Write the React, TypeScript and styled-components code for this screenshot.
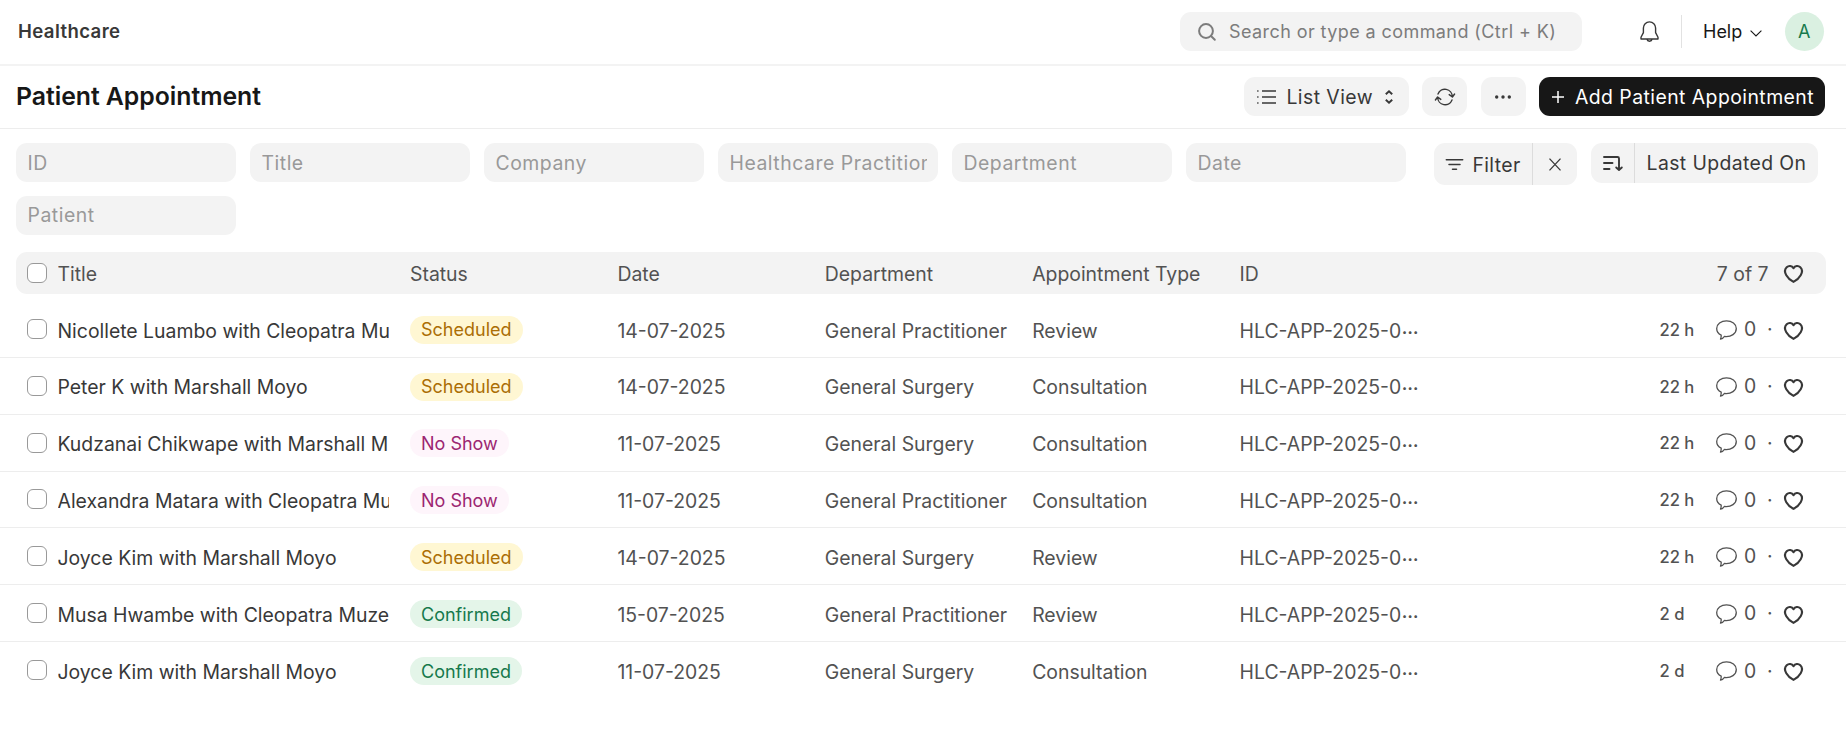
import React from "react";
import styled, { createGlobalStyle } from "styled-components";

const Global = createGlobalStyle`
  *, *::before, *::after { box-sizing: border-box; }
  body { margin: 0; background: #fff; font-family: Inter, "Liberation Sans", sans-serif; font-size: 19.4px; letter-spacing: 0.02em; color: #383838; line-height: 1.2; }
  button, input { font: inherit; letter-spacing: inherit; color: inherit; border: 0; margin: 0; }
  svg { display: block; flex: none; fill: none; stroke: currentColor; overflow: visible; }
`;

const Page = styled.div`
  width: 1846px;
  height: 735px;
  overflow: hidden;
`;
const Navbar = styled.header`
  height: 66px;
  padding: 0 22px 1px 18px;
  border-bottom: 2px solid #f3f3f3;
  display: flex;
  align-items: center;
`;
const Crumb = styled.div`
  flex: 1;
  font-size: 18.6px;
  font-weight: 600;
`;
const Search = styled.div`
  width: 402px;
  height: 39px;
  padding-left: 18px;
  border-radius: 11px;
  background: #f3f3f3;
  color: #7c7c7c;
  display: flex;
  align-items: center;
  gap: 13.5px;
  font-size: 18px;
  letter-spacing: 0.023em;
`;
const Bell = styled.div`
  margin-left: 58px;
`;
const Rule = styled.div`
  width: 1px;
  height: 33px;
  margin: 0 21px 0 22.5px;
  background: #e2e2e2;
`;
const Help = styled.div`
  display: flex;
  align-items: center;
  gap: 8px;
  width: 82px;
  font-size: 18px;
  letter-spacing: 0;
  color: #171717;
  & > svg { margin-top: 4px; }
`;
const Avatar = styled.div`
  width: 39px;
  height: 39px;
  border-radius: 50%;
  background: #daf0e1;
  color: #16794c;
  display: grid;
  place-items: center;
  font-size: 18px;
`;

const PageHead = styled.div`
  height: 63px;
  padding: 0 21px 1px 16px;
  border-bottom: 1px solid #ededed;
  display: flex;
  align-items: center;
`;
const Heading = styled.h1`
  margin: 0;
  padding-top: 1px;
  flex: 1;
  font-size: 24.8px;
  font-weight: 600;
  letter-spacing: -0.03px;
  color: #171717;
`;
const Button = styled.button<{ $w: number; $dark?: boolean; $gap?: number }>`
  width: ${(p) => p.$w}px;
  height: 39px;
  margin-left: 13.5px;
  padding: 0;
  border-radius: 11px;
  background: ${(p) => (p.$dark ? "#171717" : "#f3f3f3")};
  color: ${(p) => (p.$dark ? "#fff" : "#383838")};
  display: flex;
  align-items: center;
  justify-content: center;
  gap: ${(p) => p.$gap ?? 0}px;
  white-space: nowrap;
  letter-spacing: 0.023em;
  ${(p) => (p.$dark ? "padding-left: 2px;" : "")}
`;
const Label = styled.span<{ $drop?: number; $after?: number }>`
  padding-top: ${(p) => p.$drop ?? 2}px;
  margin-right: ${(p) => p.$after ?? 0}px;
`;

const FilterBar = styled.div`
  display: flex;
  align-items: flex-start;
  padding: 14px 28px 0 16px;
  height: 123px;
`;
const Fields = styled.div`
  display: grid;
  grid-template-columns: repeat(6, 220px);
  gap: 13.5px 14px;
  width: 1418px;
`;
const Field = styled.input`
  width: 100%;
  height: 39px;
  padding: 0 11.5px;
  border-radius: 11px;
  background: #f3f3f3;
  outline: 0;
  letter-spacing: 0.027em;
  &::placeholder { color: #999; opacity: 1; }
`;
const Group = styled.div<{ $w: number; $h: number }>`
  display: flex;
  width: ${(p) => p.$w}px;
  height: ${(p) => p.$h}px;
  border-radius: 11px;
  background: #f3f3f3;
  & + & { margin-left: 14px; }
`;
const Segment = styled.div<{ $w?: number; $gap?: number }>`
  ${(p) => (p.$w ? `width: ${p.$w}px;` : "flex: 1;")}
  display: flex;
  align-items: center;
  justify-content: center;
  gap: ${(p) => p.$gap ?? 0}px;
  white-space: nowrap;
  & + & { border-left: 1px solid #dcdcdc; }
`;

const columns = "383px repeat(4, 207.4px) 1fr auto";
const ListHead = styled.div`
  display: grid;
  grid-template-columns: ${columns};
  align-items: center;
  height: 42px;
  margin: 0 20px 7px 16px;
  padding: 0 23px 0 11px;
  border-radius: 11px;
  background: #f3f3f3;
  color: #525252;
  letter-spacing: 0;
`;
const Row = styled.div`
  display: grid;
  grid-template-columns: ${columns};
  align-items: center;
  height: 56.85px;
  padding: 1.5px 43px 0 27px;
  border-bottom: 1px solid #ededed;
  color: #525252;
  letter-spacing: 0;
  &:last-child { border-bottom: 0; }
`;
const Subject = styled.div`
  display: flex;
  align-items: center;
`;
const Check = styled.span<{ $lift?: boolean }>`
  flex: none;
  width: 20px;
  height: 20px;
  margin-right: 10.5px;
  margin-bottom: ${(p) => (p.$lift ? 1.5 : 0)}px;
  border: 1px solid #999;
  border-radius: 6px;
  background: #fff;
`;
const Name = styled.div<{ $strong?: boolean }>`
  width: 331px;
  padding-top: 3px;
  overflow: hidden;
  white-space: nowrap;
  color: ${(p) => (p.$strong ? "#383838" : "inherit")};
`;
const Cell = styled.div`
  padding-top: 3px;
  white-space: nowrap;
`;
const StatusCell = styled.div`
  display: flex;
`;
const Ellipsis = styled.span`
  margin-left: 0.5px;
  font-size: 17.5px;
  font-weight: 600;
  line-height: 0;
  vertical-align: 4px;
`;
const tones = {
  Scheduled: ["#fff7d3", "#ab6e05"],
  "No Show": ["#fef5fb", "#9c2671"],
  Confirmed: ["#e4f5e9", "#16794c"],
} as const;
const Pill = styled.span<{ $tone: keyof typeof tones }>`
  display: inline-flex;
  align-items: center;
  height: 28px;
  padding: 1px 11px 0;
  border-radius: 14px;
  font-size: 18px;
  letter-spacing: 0;
  background: ${(p) => tones[p.$tone][0]};
  color: ${(p) => tones[p.$tone][1]};
`;
const Activity = styled.div`
  display: flex;
  align-items: center;
`;
const Age = styled.span`
  width: 56.5px;
  padding-top: 2px;
  font-size: 16.6px;
  font-weight: 450;
`;
const Count = styled.span`
  width: 23px;
  margin-left: 7px;
`;
const Dot = styled.span`
  width: 17px;
`;
const Total = styled.span`
  margin-right: 15.5px;
  padding-top: 3px;
`;
const Like = styled.span`
  padding-top: 2px;
  color: #383838;
`;

const Heart = () => (
  <Like>
    <svg width="19" height="18" viewBox="0 0 19 18" strokeWidth="2.1" strokeLinejoin="round">
      <path d="M9.5 3.2C8 .6 4.7.3 2.7 2.2.6 4.2.7 7.4 2.3 10.2C3.8 12.8 6.5 15.4 9.5 16.9C12.5 15.4 15.2 12.8 16.7 10.2C18.3 7.4 18.4 4.2 16.3 2.2C14.3.3 11 .6 9.5 3.2Z" />
    </svg>
  </Like>
);
const Comment = () => (
  <svg width="21" height="20" viewBox="0 0 21 20" strokeWidth="1.3" strokeLinejoin="round">
    <path d="M10.5.8C5 .8.7 4.2.7 8.5C.7 11.5 2.6 13.9 5.2 15.2C5.3 16.8 5 18.1 4.5 19.2C6.5 18.9 7.5 17.9 8.3 16.5C15.5 17.3 20.3 13.4 20.3 8.5C20.3 4.2 16 .8 10.5.8Z" />
  </svg>
);

type Item = [string, keyof typeof tones, string, string, string, string];
const items: Item[] = [
  ["Nicollete Luambo with Cleopatra Mu", "Scheduled", "14-07-2025", "General Practitioner", "Review", "22 h"],
  ["Peter K with Marshall Moyo", "Scheduled", "14-07-2025", "General Surgery", "Consultation", "22 h"],
  ["Kudzanai Chikwape with Marshall M", "No Show", "11-07-2025", "General Surgery", "Consultation", "22 h"],
  ["Alexandra Matara with Cleopatra Mu", "No Show", "11-07-2025", "General Practitioner", "Consultation", "22 h"],
  ["Joyce Kim with Marshall Moyo", "Scheduled", "14-07-2025", "General Surgery", "Review", "22 h"],
  ["Musa Hwambe with Cleopatra Muze", "Confirmed", "15-07-2025", "General Practitioner", "Review", "2 d"],
  ["Joyce Kim with Marshall Moyo", "Confirmed", "11-07-2025", "General Surgery", "Consultation", "2 d"],
];
const fields = ["ID", "Title", "Company", "Healthcare Practitioner", "Department", "Date", "Patient"];

export default function App() {
  return (
    <Page>
      <Global />
      <Navbar>
        <Crumb>Healthcare</Crumb>
        <Search>
          <svg width="18" height="18" viewBox="0 0 18 18" strokeWidth="2" strokeLinecap="round">
            <circle cx="8" cy="8" r="6.9" />
            <path d="M13 13 16.8 16.8" />
          </svg>
          Search or type a command (Ctrl + K)
        </Search>
        <Bell>
          <svg width="19" height="21" viewBox="0 0 19 21" strokeWidth="1.4" strokeLinejoin="round">
            <path d="M9.5.9C6 .9 3.4 3.5 3.4 7V11.6L1 16.2V18H18V16.2L15.6 11.6V7C15.6 3.5 13 .9 9.5.9ZM6.9 18.2C7.2 19.6 8.2 20.2 9.5 20.2S11.8 19.6 12.1 18.2" />
          </svg>
        </Bell>
        <Rule />
        <Help>
          Help
          <svg width="12" height="7" viewBox="0 0 12 7" strokeWidth="1.1"><path d="M.6.6 6 6 11.4.6" /></svg>
        </Help>
        <Avatar>A</Avatar>
      </Navbar>
      <PageHead>
        <Heading>Patient Appointment</Heading>
        <Button $w={164.5} $gap={10}>
          <svg width="19" height="14" viewBox="0 0 19 14" strokeWidth="1.5">
            <path d="M5 1H19M5 7H19M5 13H19M.2 1H1.5M.2 7H1.5M.2 13H1.5" />
          </svg>
          <Label $after={2}>List View</Label>
          <svg width="10" height="14" viewBox="0 0 10 14" strokeWidth="1.9"><path d="M.8 4.3 4 1.2 7.2 4.3M.8 9.7 4 12.8 7.2 9.7" /></svg>
        </Button>
        <Button $w={45}>
          <svg width="20" height="18" viewBox="0 0 20 18" strokeWidth="1.4" strokeLinecap="round" strokeLinejoin="round">
            <path d="M3 6A7.4 7.4 0 0 1 17.3 8.6M14.2 6.6 17.4 9 19.6 6M17 12A7.4 7.4 0 0 1 2.7 9.4M.4 12 2.6 9 5.8 11.4" />
          </svg>
        </Button>
        <Button $w={45}>
          <svg width="16" height="4" viewBox="0 0 16 4">
            <g fill="#383838" stroke="none"><circle cx="1.7" cy="2" r="1.7" /><circle cx="8" cy="2" r="1.7" /><circle cx="14.3" cy="2" r="1.7" /></g>
          </svg>
        </Button>
        <Button $w={286} $dark $gap={11}>
          <svg width="12" height="12" viewBox="0 0 12 12" strokeWidth="1.5"><path d="M6 0V12M0 6H12" /></svg>
          <Label>Add Patient Appointment</Label>
        </Button>
      </PageHead>
      <FilterBar>
        <Fields>
          {fields.map((f) => <Field key={f} placeholder={f} />)}
        </Fields>
        <Group $w={143} $h={42}>
          <Segment $w={98} $gap={9}>
            <svg width="18" height="11" viewBox="0 0 18 11" strokeWidth="1.5" strokeLinecap="round"><path d="M1.3.8H17.7M4 5.5H15M7.5 10.2H11.5" /></svg>
            <Label $drop={3}>Filter</Label>
          </Segment>
          <Segment><svg width="12" height="13" viewBox="0 0 12 13" strokeWidth="1.3"><path d="M.5.6 11.5 12.4M11.5.6.5 12.4" /></svg></Segment>
        </Group>
        <Group $w={227} $h={40}>
          <Segment $w={43}>
            <svg width="20" height="15" viewBox="0 0 20 15" strokeWidth="1.9" strokeLinecap="round" strokeLinejoin="round">
              <path d="M1 1H14.5Q16 1 16 2.5V13.5M13.2 11.5 16 14 18.8 11.5M1 7H9.5M1 13H6.5" />
            </svg>
          </Segment>
          <Segment><Label $drop={1.5}>Last Updated On</Label></Segment>
        </Group>
      </FilterBar>
      <ListHead>
        <Subject><Check /><Name>Title</Name></Subject>
        <Cell>Status</Cell>
        <Cell>Date</Cell>
        <Cell>Department</Cell>
        <Cell>Appointment Type</Cell>
        <Cell>ID</Cell>
        <Activity><Total>7 of 7</Total><Heart /></Activity>
      </ListHead>
      <div>
        {items.map(([name, status, date, dept, kind, age], i) => (
          <Row key={i}>
            <Subject><Check $lift /><Name $strong>{name}</Name></Subject>
            <StatusCell><Pill $tone={status}>{status}</Pill></StatusCell>
            <Cell>{date}</Cell>
            <Cell>{dept}</Cell>
            <Cell>{kind}</Cell>
            <Cell>HLC-APP-2025-0<Ellipsis>…</Ellipsis></Cell>
            <Activity>
              <Age>{age}</Age>
              <Comment />
              <Count>0</Count>
              <Dot>·</Dot>
              <Heart />
            </Activity>
          </Row>
        ))}
      </div>
    </Page>
  );
}
